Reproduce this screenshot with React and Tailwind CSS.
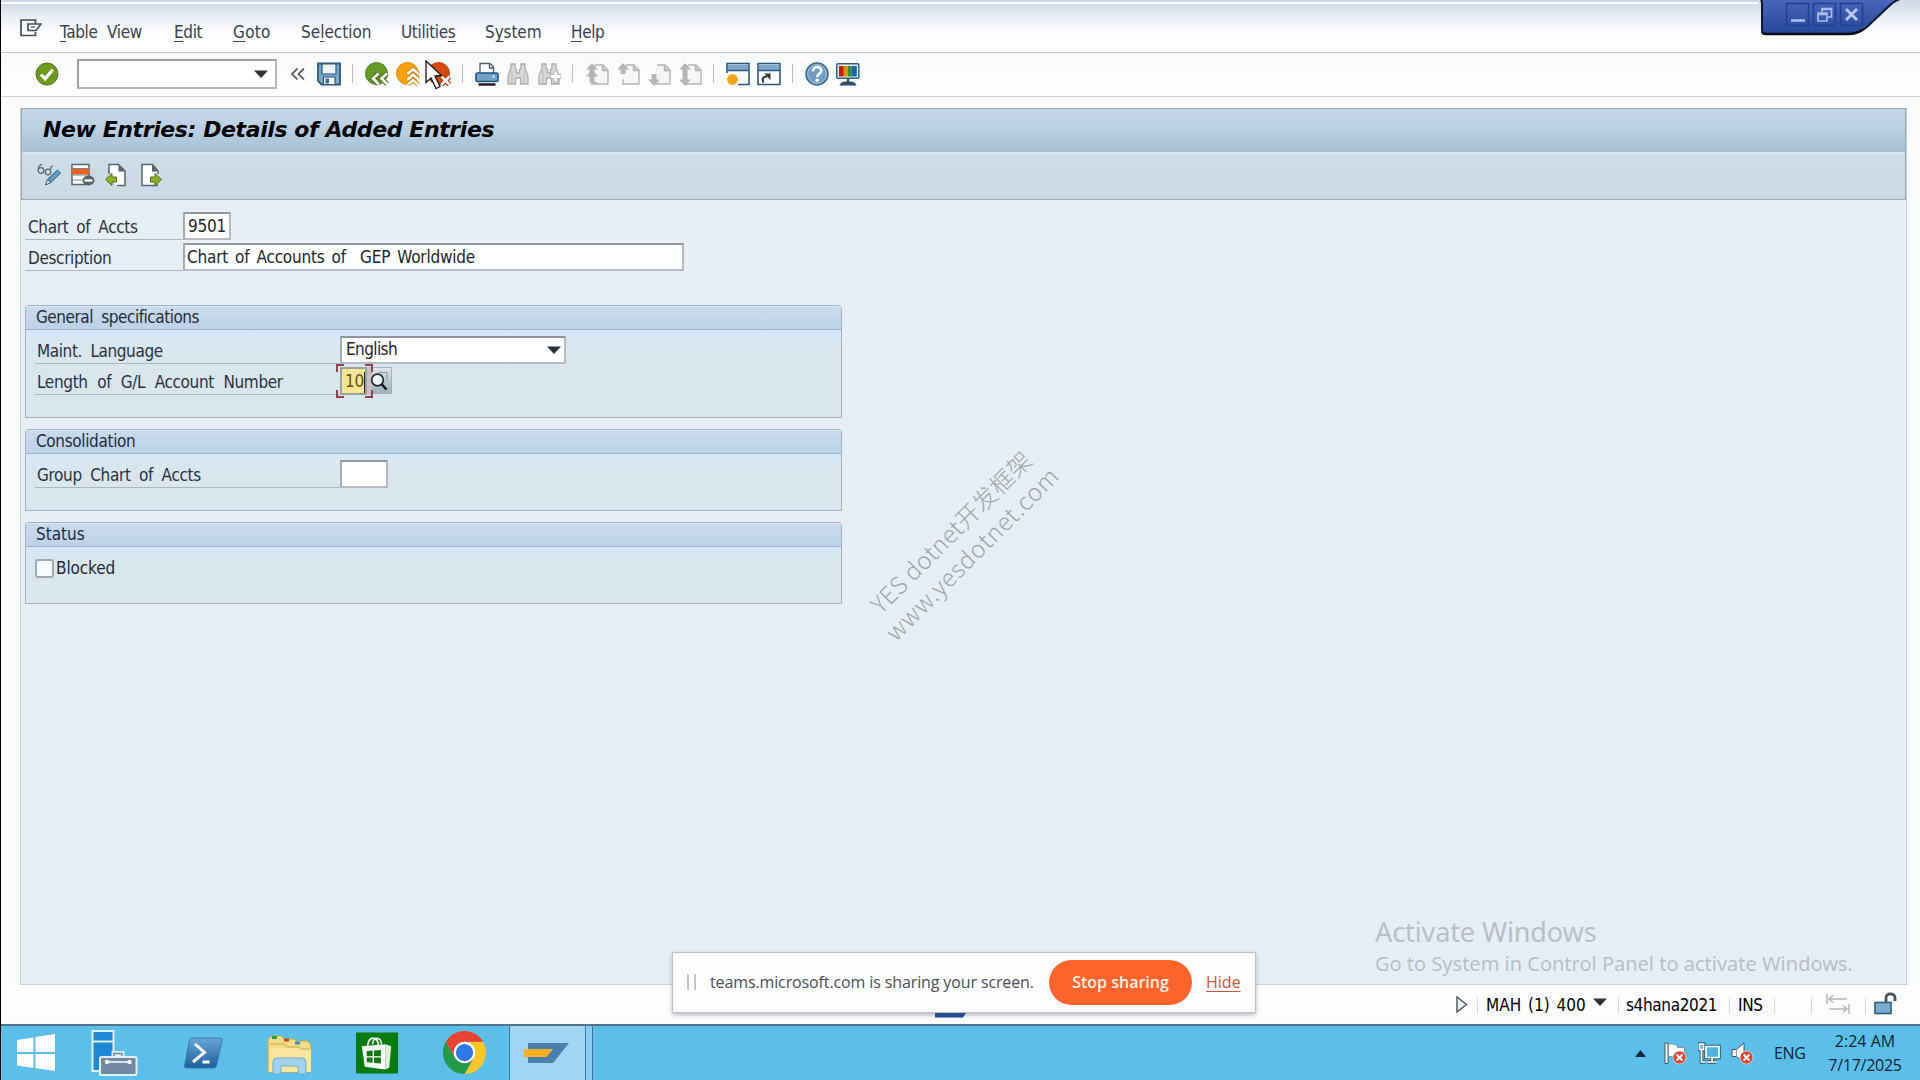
import React from 'react'

const menus = [
  { pre: '', key: 'T', post: 'able View', cls: 'w-[84px] [word-spacing:5px]' },
  { pre: '', key: 'E', post: 'dit', cls: 'w-[29px]' },
  { pre: '', key: 'G', post: 'oto', cls: 'w-[38px] tracking-[0.3px]' },
  { pre: 'Se', key: 'l', post: 'ection', cls: 'w-[70px] tracking-[0px]' },
  { pre: 'Utilitie', key: 's', post: '', cls: 'w-[54px]' },
  { pre: 'S', key: 'y', post: 'stem', cls: 'w-[56px] tracking-[-0.1px]' },
  { pre: '', key: 'H', post: 'elp', cls: 'w-[33px]' },
]

function Icon({ children }) {
  return (
    <svg className="w-6 h-6 shrink-0" viewBox="0 0 24 24" fill="none">
      {children}
    </svg>
  )
}

function Sep() {
  return <div className="w-px h-[19px] ml-[11px] mr-3 bg-[#b9bcc2] shrink-0" />
}

const Down = ({ className = '' }) => (
  <svg className={`w-[14px] h-2 shrink-0 ${className}`} viewBox="0 0 14 8">
    <path d="M0 0.5h14L7 8z" fill="#2c3238" />
  </svg>
)

/* toolbar icons */
const OkIcon = () => (
  <Icon>
    <circle cx="12" cy="12" r="11" fill="#6d9a1c" stroke="#54732b" />
    <path d="M6 12.5l4.2 4.3 7.6-9.3" stroke="#fff" strokeWidth="3.2" />
  </Icon>
)
const SaveIcon = () => (
  <Icon>
    <path d="M1 1.500h22v21H4.500L1 19z" fill="#78a9cf" stroke="#2d5878" strokeWidth="1.800" />
    <path d="M5 2h14v10H5z" fill="#eef5fa" stroke="#2d5878" strokeWidth="1.200" />
    <path d="M6.500 15h11.500v7.500H6.500z" fill="#fff" stroke="#2d5878" strokeWidth="1.200" />
    <path d="M8.500 16.500h3.500v5H8.500z" fill="#3f6b8c" />
  </Icon>
)
const BackIcon = () => (
  <Icon>
    <circle cx="11.500" cy="11.500" r="11" fill="#679a24" stroke="#557a30" />
    <path d="M13.500 11.500l-5.500 5 5.500 5.500M22 11.500l-5.500 5 5.500 5.500" stroke="#4d7222" strokeWidth="5" />
    <path d="M13.500 11.500l-5.500 5 5.500 5.500M22 11.500l-5.500 5 5.500 5.500" stroke="#fff" strokeWidth="2.600" />
  </Icon>
)
const ExitIcon = () => (
  <Icon>
    <circle cx="11.500" cy="11.500" r="11" fill="#f5a30c" stroke="#d28a1a" />
    <path d="M11.500 12l5.500-5 5.500 5M11.500 17.500l5.500-5 5.500 5M11.500 23l5.500-5 5.500 5" stroke="#d9820c" strokeWidth="4.400" />
    <path d="M11.500 12l5.500-5 5.500 5M11.500 17.500l5.500-5 5.500 5M11.500 23l5.500-5 5.500 5" stroke="#fff" strokeWidth="2.400" />
  </Icon>
)
const CancelIcon = () => (
  <Icon>
    <circle cx="11.500" cy="11.500" r="11" fill="#d64a10" stroke="#b3451c" />
    <path d="M14.500 14.500l8 8M22.500 14.500l-8 8" stroke="#a8300a" strokeWidth="5" />
    <path d="M14.500 14.500l8 8M22.500 14.500l-8 8" stroke="#fff" strokeWidth="2.800" />
  </Icon>
)
const PrintIcon = () => (
  <Icon>
    <path d="M5 11.500V1.500h10l3.500 3.500v6.500" fill="#fff" stroke="#555e66" strokeWidth="1.400" />
    <path d="M14.500 1.500V6h4.500" stroke="#555e66" strokeWidth="1.400" />
    <rect x="1" y="11" width="22" height="8.500" rx="1.500" fill="#6fa3c9" stroke="#1f5377" strokeWidth="1.600" />
    <circle cx="18.500" cy="14.500" r="1.300" fill="#dff0fb" />
    <path d="M3.500 22.500h17" stroke="#15191d" strokeWidth="2.400" />
  </Icon>
)
const FindIcon = ({ plus }) => (
  <Icon>
    <path
      d="M5 2h4v4l1.500 2v3h3V8L15 6V2h4v4l3 8v8h-7.500v-6h-5v6H2v-8l3-8z"
      fill="#d9d9d9"
      stroke="#a9abad"
      strokeWidth="1.300"
    />
    <path d="M6 9v12M18 9v12" stroke="#b9bbbd" strokeWidth="1.200" />
    {plus && <path d="M13.500 12.500h3.500V9h3.500v3.500H24v4h-3.500V20H17v-3.500h-3.500z" fill="#fff" stroke="#b5b7b9" />}
  </Icon>
)
const PageIcon = ({ up, down, twice }) => (
  <Icon>
    <path d="M10 3h8l5 5v14H7v-5" fill="#f6f6f7" stroke="#b2b4b6" strokeWidth="1.400" />
    <path d="M17.500 3v5.500H23" fill="#ccc" stroke="#b2b4b6" strokeWidth="1.400" />
    {up && <path d="M7 1l6 6.500H9.500V12h-5V7.500H1z" fill="#b3b5b7" />}
    {twice && <path d="M7 8l6 6.500H9.500V20h3v2h-7v-2h-1v-5.500H1z" fill="#b3b5b7" />}
    {down && <path d="M7 24l6-6.500H9.500V12h-5v5.500H1z" fill="#b3b5b7" />}
  </Icon>
)
const WindowIcon = ({ children }) => (
  <Icon>
    <path d="M1 1.500h22v21H1z" fill="#fdfdfe" stroke="#2d5878" strokeWidth="1.600" />
    <path d="M2 2.500h20V8H2z" fill="#7aa9cc" />
    <path d="M1 8.500h22" stroke="#2d5878" strokeWidth="1.500" />
    {children}
  </Icon>
)
const HelpIcon = () => (
  <Icon>
    <circle cx="12" cy="12" r="11" fill="#6f9cc0" stroke="#41698a" strokeWidth="1.500" />
    <circle cx="12" cy="12" r="9.300" stroke="#a9c9e0" strokeWidth="0.900" />
    <path d="M8 9.300c0-5.600 8.300-5.200 8.300-.6 0 3-4 3-4 6.200" stroke="#fff" strokeWidth="2.600" />
    <circle cx="12.200" cy="18.200" r="1.700" fill="#fff" />
  </Icon>
)
const MonitorIcon = () => (
  <Icon>
    <rect x="0.800" y="1.800" width="22" height="14.500" rx="1" fill="#e9f3fa" stroke="#2e607f" strokeWidth="1.500" />
    <path d="M3 4h4.800v10.500H3z" fill="#c31f12" />
    <path d="M7.800 4h4v10.500h-4z" fill="#cf9a0c" />
    <path d="M11.800 4h4v10.500h-4z" fill="#3f8a3a" />
    <path d="M15.800 4h5v10.500h-5z" fill="#1565b0" />
    <path d="M12 16.500v4M5.500 22.300c2-2.500 11-2.500 13 0z" stroke="#2b4d63" strokeWidth="2.200" fill="#2b4d63" />
  </Icon>
)

/* application toolbar icons */
const DisplayChangeIcon = () => (
  <Icon>
    <g stroke="#5d6b75" strokeWidth="1.300">
      <circle cx="4" cy="7.500" r="2.800" />
      <circle cx="11" cy="9" r="2.800" />
      <path d="M1.200 7C1.200 4 2.500 2 5 1.500M13.500 7.500c0-2.500 0-4.500 2.500-4" />
    </g>
    <path d="M20.500 7l3 3-9.500 9.500-3.500-3z" fill="#5f9dcb" stroke="#2d5878" />
    <path d="M10.500 16.500l3.500 3-5.500 2.500z" fill="#eee" stroke="#40535f" />
  </Icon>
)
const DeleteRowIcon = () => (
  <Icon>
    <path d="M1 1.500h17v20H1z" fill="#fff" stroke="#5a666f" strokeWidth="1.500" />
    <path d="M1 6h17v5.500H1z" fill="#e8641b" />
    <path d="M1 5.500h17M1 12h17M1 17h17" stroke="#7b868d" />
    <ellipse cx="17.500" cy="17.500" rx="6" ry="5" fill="#56646f" />
    <path d="M13.500 17.500h8" stroke="#fff" strokeWidth="2.400" />
  </Icon>
)
const PrevIcon = () => (
  <Icon>
    <path d="M4 11V1.500h9.500L20 8v14.500h-9" fill="#fff" />
    <path d="M4 11V1.500h9.500L20 8v14.500h-8" stroke="#56646f" strokeWidth="1.500" />
    <path d="M13.500 1.500V8.500H20z" fill="#56646f" />
    <path d="M0.500 16.500l6.500-6v3.500h4.500v5H7v3.500z" fill="#8db025" stroke="#4f6f1a" />
  </Icon>
)
const NextIcon = () => (
  <Icon>
    <path d="M17 21v1.500H2v-21h10.500L18 8v3" fill="#fff" stroke="#56646f" strokeWidth="1.500" />
    <path d="M12 1.500V8.500h6z" fill="#56646f" />
    <path d="M21.500 16.500l-6.500-6v3.500h-4.500v5H15v3.500z" fill="#8db025" stroke="#4f6f1a" />
  </Icon>
)

function Input({ className = '', children }) {
  return (
    <div
      className={`flex h-7 shrink-0 items-center border-2 border-[#a3abb4] border-t-[#8d959e] border-r-[#b3bac1] border-b-[#b3bac1] bg-white whitespace-pre text-[#20252b] ${className}`}
    >
      {children}
    </div>
  )
}

function Label({ className = '', children }) {
  return (
    <div className={`flex h-7 shrink-0 items-center border-b border-[#aab6c1] pt-1 text-[#28323f] ${className}`}>
      {children}
    </div>
  )
}

function Group({ title, titleClass = '', className = '', children }) {
  return (
    <div className={`w-[817px] rounded-t-[4px] border border-[#9fb2c4] bg-[#d9e7f2] ${className}`}>
      <div
        className={`flex h-6 items-center rounded-t-[3px] border-b border-[#9db3c9] border-t border-t-[#dbe8f3] bg-linear-to-b from-[#c9dcec] to-[#bdd1e8] pl-[10px] text-[#1f2c3b] ${titleClass}`}
      >
        {title}
      </div>
      <div className="bg-linear-to-b from-[#d6e8f8] to-[#dae6ee] to-30% h-[calc(100%-24px)] pt-[6px] pl-[9px]">{children}</div>
    </div>
  )
}

function MenuBar() {
  return (
    <div className="flex h-[53px] shrink-0 items-start border-b border-[#c4c6c9] bg-linear-to-b from-[#d2dbe8] from-[8%] via-[#e9eef6] via-30% to-white to-70%">
      <svg className="ml-[19px] mt-[19px] h-[18px] w-[22px]" viewBox="0 0 22 18" fill="none" stroke="#454c55" strokeWidth="1.700">
        <path d="M15.500 5V1H1v15.500h14.500V13" />
        <path d="M8 5h13l-5 6.500H8z" fill="#fff" />
        <path d="M11 8h4" strokeWidth="1.200" />
      </svg>
      <div className="ml-[18px] mt-[22px] flex h-5 gap-[30px] leading-5 text-[#39404f]">
        {menus.map((m) => (
          <div key={m.pre + m.key + m.post} className={`whitespace-nowrap ${m.cls}`}>
            {m.pre}
            <span className="underline decoration-1 underline-offset-[3px]">{m.key}</span>
            {m.post}
          </div>
        ))}
      </div>
    </div>
  )
}

function Toolbar() {
  return (
    <div className="flex h-11 shrink-0 items-center border-b border-[#cdd0d6] bg-linear-to-b from-[#f8f9fb] to-white pl-[34px] pb-[2px]">
      <OkIcon />
      <div className="ml-[18px] flex h-[30px] w-[200px] items-center justify-end border-2 border-[#9b9fa4] border-r-[#b4b7bb] border-b-[#b4b7bb] bg-white pr-[7px]">
        <Down className="w-3" />
      </div>
      <svg className="ml-[14px] h-3 w-[14px]" viewBox="0 0 14 12" fill="none" stroke="#50565c" strokeWidth="1.700">
        <path d="M6.500 0.500L1 6l5.500 5.500M13 0.500L7.500 6l5.500 5.500" />
      </svg>
      <div className="ml-3 flex">
        <SaveIcon />
      </div>
      <Sep />
      <div className="flex gap-[7px]">
        <BackIcon />
        <ExitIcon />
        <CancelIcon />
      </div>
      <Sep />
      <div className="flex gap-[7px]">
        <PrintIcon />
        <FindIcon />
        <FindIcon plus />
      </div>
      <Sep />
      <div className="flex gap-[7px]">
        <PageIcon up twice />
        <PageIcon up />
        <PageIcon down />
        <PageIcon up down />
      </div>
      <Sep />
      <div className="flex gap-[7px]">
        <WindowIcon>
          <path d="M0 11h12v13H0z" fill="#fff" />
          <path d="M6.500 12v11M1 17.500h11M2.600 13.600l7.800 7.800M10.400 13.600l-7.800 7.800" stroke="#f2a41a" strokeWidth="3" />
        </WindowIcon>
        <WindowIcon>
          <path d="M6.500 20.500c-2-4 0-6.500 4-6" stroke="#2c3238" strokeWidth="2" />
          <path d="M7.500 11.500h6v6.500z" fill="#2c3238" />
        </WindowIcon>
      </div>
      <Sep />
      <div className="flex gap-[7px]">
        <HelpIcon />
        <MonitorIcon />
      </div>
    </div>
  )
}

function Screen() {
  return (
    <div className="ml-[19px] mr-[13px] mt-[11px] flex h-[877px] shrink-0 flex-col border border-[#c6d0da] bg-[#e8eef5]">
      <div className="-mt-px h-[92px] shrink-0 border border-[#98a9b6] bg-[#cedae4]">
        <div className="flex h-[45px] items-center border-b-2 border-[#dae6ee] bg-linear-to-b from-[#c6d8e8] via-[#b9cfe1] to-[#a8c2d7] pb-[3px] pl-[21px] font-['DejaVu_Sans'] text-[22px] font-bold italic tracking-[-0.4px] text-black [word-spacing:0px]">
          New Entries: Details of Added Entries
        </div>
        <div className="flex h-[45px] items-center bg-linear-to-b from-[#cddde8] to-[#ced9e2] pb-[3px] pl-[15px]">
          <DisplayChangeIcon />
          <div className="ml-[10px] flex">
            <DeleteRowIcon />
          </div>
          <div className="ml-[10px] flex">
            <PrevIcon />
          </div>
          <div className="ml-[11px] flex">
            <NextIcon />
          </div>
        </div>
      </div>

      <div className="flex flex-col pl-1 pt-3">
        <div className="flex">
          <Label className="w-[158px] pl-[3px] [word-spacing:3.5px]">Chart of Accts</Label>
          <Input className="w-12 pl-[3px] pt-[2px] tracking-[-0.2px]">9501</Input>
        </div>
        <div className="mt-[3px] flex">
          <Label className="w-[158px] pl-[3px]">Description</Label>
          <Input className="w-[501px] pl-[2px] pt-[2px] tracking-[-0.2px] [word-spacing:2.4px]">Chart of Accounts of  GEP Worldwide</Input>
        </div>

        <Group title="General specifications" titleClass="tracking-[-0.48px]" className="mt-[34px] h-[113px]">
          <div className="flex">
            <Label className="w-[305px] pl-[2px] tracking-[-0.4px]">Maint. Language</Label>
            <Input className="w-[226px] justify-between pl-1 pr-[3px] tracking-[-0.6px]">
              English
              <Down className="w-3" />
            </Input>
          </div>
          <div className="mt-[3px] flex">
            <Label className="w-[305px] pl-[2px] [word-spacing:5px]">Length of G/L Account Number</Label>
            <div className="relative flex">
              <div className="flex h-7 w-[27px] items-center border-2 border-[#9ea09b] bg-[#f7e596] pl-[3px] pt-[2px] text-[#5b5220]">
                10
                <div className="h-[21px] w-px shrink-0 bg-[#20252b]" />
              </div>
              <div className="w-[6px] bg-[#c9bfc4]" />
              {/* focus corners */}
              <svg className="absolute -left-1 -top-[3px] h-[34px] w-[37px]" viewBox="0 0 37 34" fill="none" stroke="#93414f" strokeWidth="2">
                <path d="M1 8V1h7M29 1h7v7M36 26v7h-7M8 33H1v-7" />
              </svg>
              <div className="flex h-[27px] w-[19px] items-center border-y border-r border-[#a5afb8] bg-linear-to-b from-[#dde5eb] to-[#9fb0bf]">
                <svg className="-ml-1 h-5 w-5 shrink-0" viewBox="0 0 20 20" fill="none">
                  <path d="M10 1.500h8v8" stroke="#8798a6" />
                  <circle cx="8.500" cy="9" r="5.800" fill="#eef5fa" stroke="#22272c" strokeWidth="1.700" />
                  <path d="M12.500 13l5 5.500" stroke="#14181b" strokeWidth="2.600" />
                </svg>
              </div>
            </div>
          </div>
        </Group>

        <Group title="Consolidation" className="mt-[11px] h-[82px]">
          <div className="flex">
            <Label className="w-[305px] pl-[2px]">Group Chart of Accts</Label>
            <Input className="w-12" />
          </div>
        </Group>

        <Group title="Status" titleClass="tracking-[0px]" className="mt-[11px] h-[82px]">
          <div className="flex h-7 items-center pt-[3px] text-[#1f2833]">
            <div className="h-[19px] w-[19px] rounded-[3px] border-2 border-[#a1a8af] bg-[#f7fbfe]" />
            <span className="ml-[2px] tracking-[-0.1px]">Blocked</span>
          </div>
        </Group>
      </div>
    </div>
  )
}

function StatusBar() {
  return (
    <div className="flex h-[39px] shrink-0 items-center bg-linear-to-b from-[#fdfdfe] to-[#fbfbfc] pt-[2px] text-black">
      <svg className="-mt-[2px] ml-[1455px] h-[17px] w-3" viewBox="0 0 12 17">
        <path d="M1 1l9.500 7.500L1 16z" fill="#e7eff5" stroke="#545c63" strokeWidth="1.500" />
      </svg>
      <div className="ml-[9px] h-[17px] w-px bg-[#d5d7da]" />
      <span className="ml-2 w-[100px] shrink-0 whitespace-nowrap tracking-[0px] [word-spacing:2px]">MAH (1) 400</span>
      <Down className="ml-[7px] w-3 -mt-2" />
      <div className="ml-[11px] h-[17px] w-px bg-[#d5d7da]" />
      <span className="ml-[7px] w-[92px] shrink-0">s4hana2021</span>
      <div className="ml-[11px] h-[17px] w-px bg-[#d5d7da]" />
      <span className="ml-2 w-[26px] shrink-0">INS</span>
      <div className="ml-[10px] h-[17px] w-px bg-[#d5d7da]" />
      <div className="ml-[36px] h-[17px] w-px bg-[#d5d7da]" />
      <svg className="ml-[14px] -mt-1 h-5 w-6" viewBox="0 0 24 20" fill="none" stroke="#b4b6b9" strokeWidth="1.500">
        <path d="M1 0v10M3 5h18M7 1.500L3 5l4 3.500M23 10v10M3 15h18M17 11.500l4 3.500-4 3.500" />
      </svg>
      <div className="ml-[15px] h-[17px] w-px bg-[#d5d7da]" />
      <svg className="-mt-1 ml-2 h-[23px] w-[23px]" viewBox="0 0 23 23" fill="none">
        <path d="M12 10V6c0-5.500 9-5.500 9 0v3" stroke="#4b525a" strokeWidth="2.800" />
        <rect x="1" y="10.500" width="16" height="11" fill="#7dabd0" stroke="#2e5b7c" strokeWidth="1.600" />
      </svg>
    </div>
  )
}

function Taskbar() {
  return (
    <div className="flex h-[56px] shrink-0 items-stretch border-t-2 border-[#4f7488] bg-[#5bbfe9] font-['Open_Sans'] text-[16px] tracking-[0px] text-[#0d2430] [word-spacing:0px]">
      <svg className="ml-4 mt-2 h-[37px] w-[39px] shrink-0" viewBox="0 0 39 37" fill="#fff">
        <path d="M0 6l16.500-2.500V18H0zM18.500 3L38 0v18H18.500zM0 20h16.500v14L0 31.500zM18.500 20H38v17l-19.500-3z" />
      </svg>
      <svg className="ml-[35px] mt-1 h-[46px] w-[47px] shrink-0" viewBox="0 0 47 46" fill="none">
        <path d="M1.500 1h21v40h-21z" fill="#1c87d4" stroke="#dff1fb" strokeWidth="2" />
        <path d="M2 11.500h20" stroke="#dff1fb" strokeWidth="2" />
        <path d="M23 27v-3.500h8V27" stroke="#dff1fb" strokeWidth="5" />
        <path d="M23 27v-3.500h8V27" stroke="#6a89a4" strokeWidth="1.500" />
        <rect x="9" y="27" width="36.500" height="18" rx="1.500" fill="#7189a2" stroke="#dff1fb" strokeWidth="2" />
        <path d="M16 32h23" stroke="#fff" strokeWidth="1.500" />
        <circle cx="16" cy="32" r="2.200" fill="#fff" />
        <circle cx="38.500" cy="32" r="2.200" fill="#fff" />
      </svg>
      <svg className="ml-[46px] mt-[11px] h-8 w-[39px] shrink-0" viewBox="0 0 39 32" fill="none">
        <defs>
          <linearGradient id="ps" x1="0" y1="0" x2="0" y2="1">
            <stop offset="0" stopColor="#6ba6d4" />
            <stop offset="1" stopColor="#1b5ea0" />
          </linearGradient>
        </defs>
        <path d="M8 1h28q2.500 0 2 2.500l-5.500 25q-.6 2.500-3 2.500H2.500q-2.500 0-2-2.500L5.500 3.500Q6 1 8 1z" fill="url(#ps)" stroke="#3a78ad" />
        <path d="M11 7l9.500 8.500L9 25M18.500 25h7" stroke="#fff" strokeWidth="3" />
      </svg>
      <svg className="ml-[43px] mt-[9px] h-10 w-[48px] shrink-0" viewBox="0 0 48 40" fill="none">
        <path d="M2 4l4-3h9l3 3h10l3 2h11l3 4v27H2z" fill="#f3dc87" stroke="#c9a646" />
        <path d="M4 13h41v24H3z" fill="#f8e69c" />
        <path d="M4 9h14l3 3h11l3 2h10" stroke="#c9a646" />
        <path d="M6 2.500h5" stroke="#2d9b3f" strokeWidth="3" />
        <path d="M18 5h5" stroke="#cc4a2a" strokeWidth="3" />
        <path d="M29 8h5" stroke="#3f8fd0" strokeWidth="3" />
        <path d="M7 39V27q0-4 4-4h25q4 0 4 4v12h-8v-8H15v8z" fill="#a3d2ef" stroke="#6fa9cf" />
      </svg>
      <svg className="ml-[42px] mt-[6px] h-[42px] w-[42px] shrink-0" viewBox="0 0 43 42" fill="none">
        <path d="M0 0h43v42H0z" fill="#0a7c0f" />
        <path d="M12 14c0-11 11-11 11 0M17 12c0-8 9-8 9 0" stroke="#e4f3e4" strokeWidth="1.800" />
        <path d="M6 14l24-2v26L9 35z" fill="#fff" />
        <path d="M30 12l6 2-2 22-4 2z" fill="#e0eee0" />
        <path d="M11 19l6-.5v5.700h-6zM18.500 18.500l7-.6v6.300h-7zM11 25.500h6v5.500l-6-.6zM18.500 25.500h7v6.300l-7-.6z" fill="#0a7c0f" />
      </svg>
      <svg className="ml-[44px] mt-[4px] h-[45px] w-[45px] shrink-0" viewBox="0 0 48 48">
        <path d="M24 12.500h19.900A23 23 0 0 1 24 47l10-17.300z" fill="#fcc62a" />
        <path d="M24 24l10 5.700L24 47A23 23 0 0 1 4.100 12.500L14 29.700z" fill="#25994a" />
        <path d="M4.100 12.500A23 23 0 0 1 43.900 12.500H24L14 29.700z" fill="#e8432f" />
        <circle cx="24" cy="24" r="11.500" fill="#fff" />
        <circle cx="24" cy="24" r="9.200" fill="#2f78e6" />
      </svg>
      <div className="ml-[22px] flex w-[77px] shrink-0 items-center border-x border-[#3f7896] bg-[#a2d5f3] pl-[14px]">
        <svg className="h-[22px] w-[45px]" viewBox="0 0 45 22">
          <path d="M4 1h41L29 21H4z" fill="#4a7fae" />
          <path d="M0 7h29l-6.500 8H0z" fill="#fbb122" />
        </svg>
      </div>
      <div className="w-[7px] shrink-0 border-r border-[#3f7896] bg-[#8bcdf0]" />

      <svg className="ml-[1042px] mt-6 h-[7px] w-[11px] shrink-0" viewBox="0 0 11 7">
        <path d="M5.500 0L11 7H0z" fill="#0c2a44" />
      </svg>
      <svg className="ml-[18px] mt-4 h-[23px] w-[23px] shrink-0" viewBox="0 0 23 23" fill="none">
        <path d="M1 1h3v20.500H1z" fill="#fff" stroke="#3b5566" />
        <path d="M4.500 2.500c4-2 6 1 9 1v2h7v9H4.500z" fill="#fff" stroke="#6b8494" strokeWidth="0.800" />
        <circle cx="15.500" cy="15.500" r="6.500" fill="#de4530" stroke="#fbe6e2" strokeWidth="0.700" />
        <path d="M12.500 12.500l6 6M18.500 12.500l-6 6" stroke="#fff" strokeWidth="2" />
      </svg>
      <svg className="ml-[11px] mt-4 h-[23px] w-[23px] shrink-0" viewBox="0 0 23 23" fill="none">
        <g stroke="#2f5468" strokeWidth="3.600">
          <path d="M8 4.500h13v11H8zM14 16v4M9 20h10M3.500 8v12h4" />
          <path d="M1.500 2h4v5.500h-4z" />
        </g>
        <g stroke="#fff" strokeWidth="1.700">
          <path d="M8 4.500h13v11H8z" fill="#4fb2dc" />
          <path d="M14 16v4M9 20h10M3.500 8v12h4" />
          <path d="M1.500 2h4v5.500h-4z" fill="#4fb2dc" />
        </g>
      </svg>
      <svg className="ml-[10px] mt-4 h-[23px] w-[23px] shrink-0" viewBox="0 0 23 23" fill="none">
        <path d="M1 7.500h4.500L13 1v20l-7.500-6.500H1z" fill="#fff" stroke="#3b5566" />
        <path d="M5.500 7.500v7" stroke="#8ba2b0" />
        <circle cx="15.500" cy="15.500" r="6.500" fill="#de4530" stroke="#fbe6e2" strokeWidth="0.700" />
        <path d="M12.500 12.500l6 6M18.500 12.500l-6 6" stroke="#fff" strokeWidth="2" />
      </svg>
      <span className="ml-[20px] w-8 shrink-0 self-center tracking-[-0.3px]">ENG</span>
      <div className="ml-[20px] w-[78px] shrink-0 pt-[3px] text-center leading-6 whitespace-nowrap">
        <div>2:24 AM</div>
        <div className="tracking-[-0.25px]">7/17/2025</div>
      </div>
    </div>
  )
}

function ShareBar() {
  return (
    <div className="absolute left-[671px] top-[952px] flex h-[61px] w-[584px] items-center border border-[#bcc2cb] bg-[#fdfdfe] pb-px font-['Open_Sans'] text-[16px] text-[#4b4f55] shadow-[0_2px_4px_rgba(60,60,80,0.35)] [word-spacing:0px]">
      <div className="ml-[14px] h-4 w-[9px] shrink-0 border-x-2 border-[#c3c5c8]" />
      <span className="ml-[14px] w-[325px] shrink-0 whitespace-nowrap tracking-[-0.12px]">teams.microsoft.com is sharing your screen.</span>
      <div className="ml-[14px] flex h-[45px] w-[143px] shrink-0 items-center justify-center rounded-full bg-[#fe642c] pb-px font-semibold tracking-[0px] text-[#fff0e6]">
        Stop sharing
      </div>
      <span className="ml-[14px] tracking-[0px] text-[#c8563c] underline underline-offset-[3px]">Hide</span>
    </div>
  )
}

function SessionControls() {
  return (
    <div className="absolute left-[1757px] top-0">
      <svg className="h-[38px] w-[142px]" viewBox="0 0 142 38" fill="none">
        <defs>
          <linearGradient id="pin" x1="0" y1="0" x2="0" y2="1">
            <stop offset="0" stopColor="#4a68bb" />
            <stop offset="1" stopColor="#27479b" />
          </linearGradient>
        </defs>
        <path d="M2 -2q2 2 2 6v26q0 4 4 4h82q12 0 20-8l20-19q6-6 12-8z" fill="url(#pin)" stroke="#0d1633" strokeWidth="2" />
        <path d="M4 32q1 2 4 2h82q8 0 14-4" stroke="#060a18" strokeWidth="2.500" />
        <g stroke="#21408f" strokeWidth="1.500">
          <path d="M28.500 3.500h22v22h-22zM55.500 3.500h22v22h-22zM82.500 3.500h22v22h-22z" />
        </g>
        <path d="M33 20.500h14" stroke="#aabff0" strokeWidth="2.600" />
        <path d="M60 13h9v8h-9zM60 14.500h9M64 12V8.500h9.500V17H70M64 9.500h9" stroke="#aabff0" strokeWidth="1.700" />
        <path d="M88 9l11 11M99 9L88 20" stroke="#b9caf3" strokeWidth="2.800" />
      </svg>
    </div>
  )
}

export default function App() {
  return (
    <div className="relative flex h-[1080px] w-[1920px] flex-col overflow-hidden border-l border-black bg-[#f9fbfd] font-['DejaVu_Sans_Condensed','DejaVu_Sans',sans-serif] text-[17px] tracking-[-0.35px] [word-spacing:4px]">
      <MenuBar />
      <Toolbar />
      <Screen />
      <StatusBar />
      <Taskbar />

      {/* remote desktop overlays */}
      <div className="absolute left-[1374px] top-[912px] font-['Noto_Sans'] tracking-[0px] text-[#b9bfc5] whitespace-nowrap [word-spacing:0px]">
        <div className="text-[27px] leading-10 tracking-[-0.1px]">Activate Windows</div>
        <div className="text-[20px] leading-6">Go to System in Control Panel to activate Windows.</div>
      </div>
      <div className="absolute left-[845px] top-[508px] h-16 w-[240px] -rotate-45 pl-[7px] font-['Noto_Sans_CJK_SC',sans-serif] text-[24px] leading-[30px] font-light tracking-[0.2px] text-[#a0a5aa] whitespace-nowrap [word-spacing:0px]">
        <div>YES dotnet开发框架</div>
        <div className="-ml-[9px] tracking-[0.7px]">www.yesdotnet.com</div>
      </div>
      <svg className="absolute left-[934px] top-[1010px] h-[8px] w-[33px]" viewBox="0 0 33 8">
        <path d="M0 0h33l-5 7.500H0z" fill="#1f4f96" />
      </svg>
      <ShareBar />
      <div className="absolute -left-px top-0 h-1 w-[1758px] border-b-2 border-[#fdfdff] bg-[#cdd5e6]" />
      <SessionControls />
      <svg className="absolute left-[424px] top-[60px] h-[33px] w-5" viewBox="0 0 20 33">
        <path d="M1 1l15.500 14.500-6.500.500 5 10.500-4 2-5-10.500L1 22.500z" fill="#fff" stroke="#1d1512" strokeWidth="1.300" />
      </svg>
    </div>
  )
}
